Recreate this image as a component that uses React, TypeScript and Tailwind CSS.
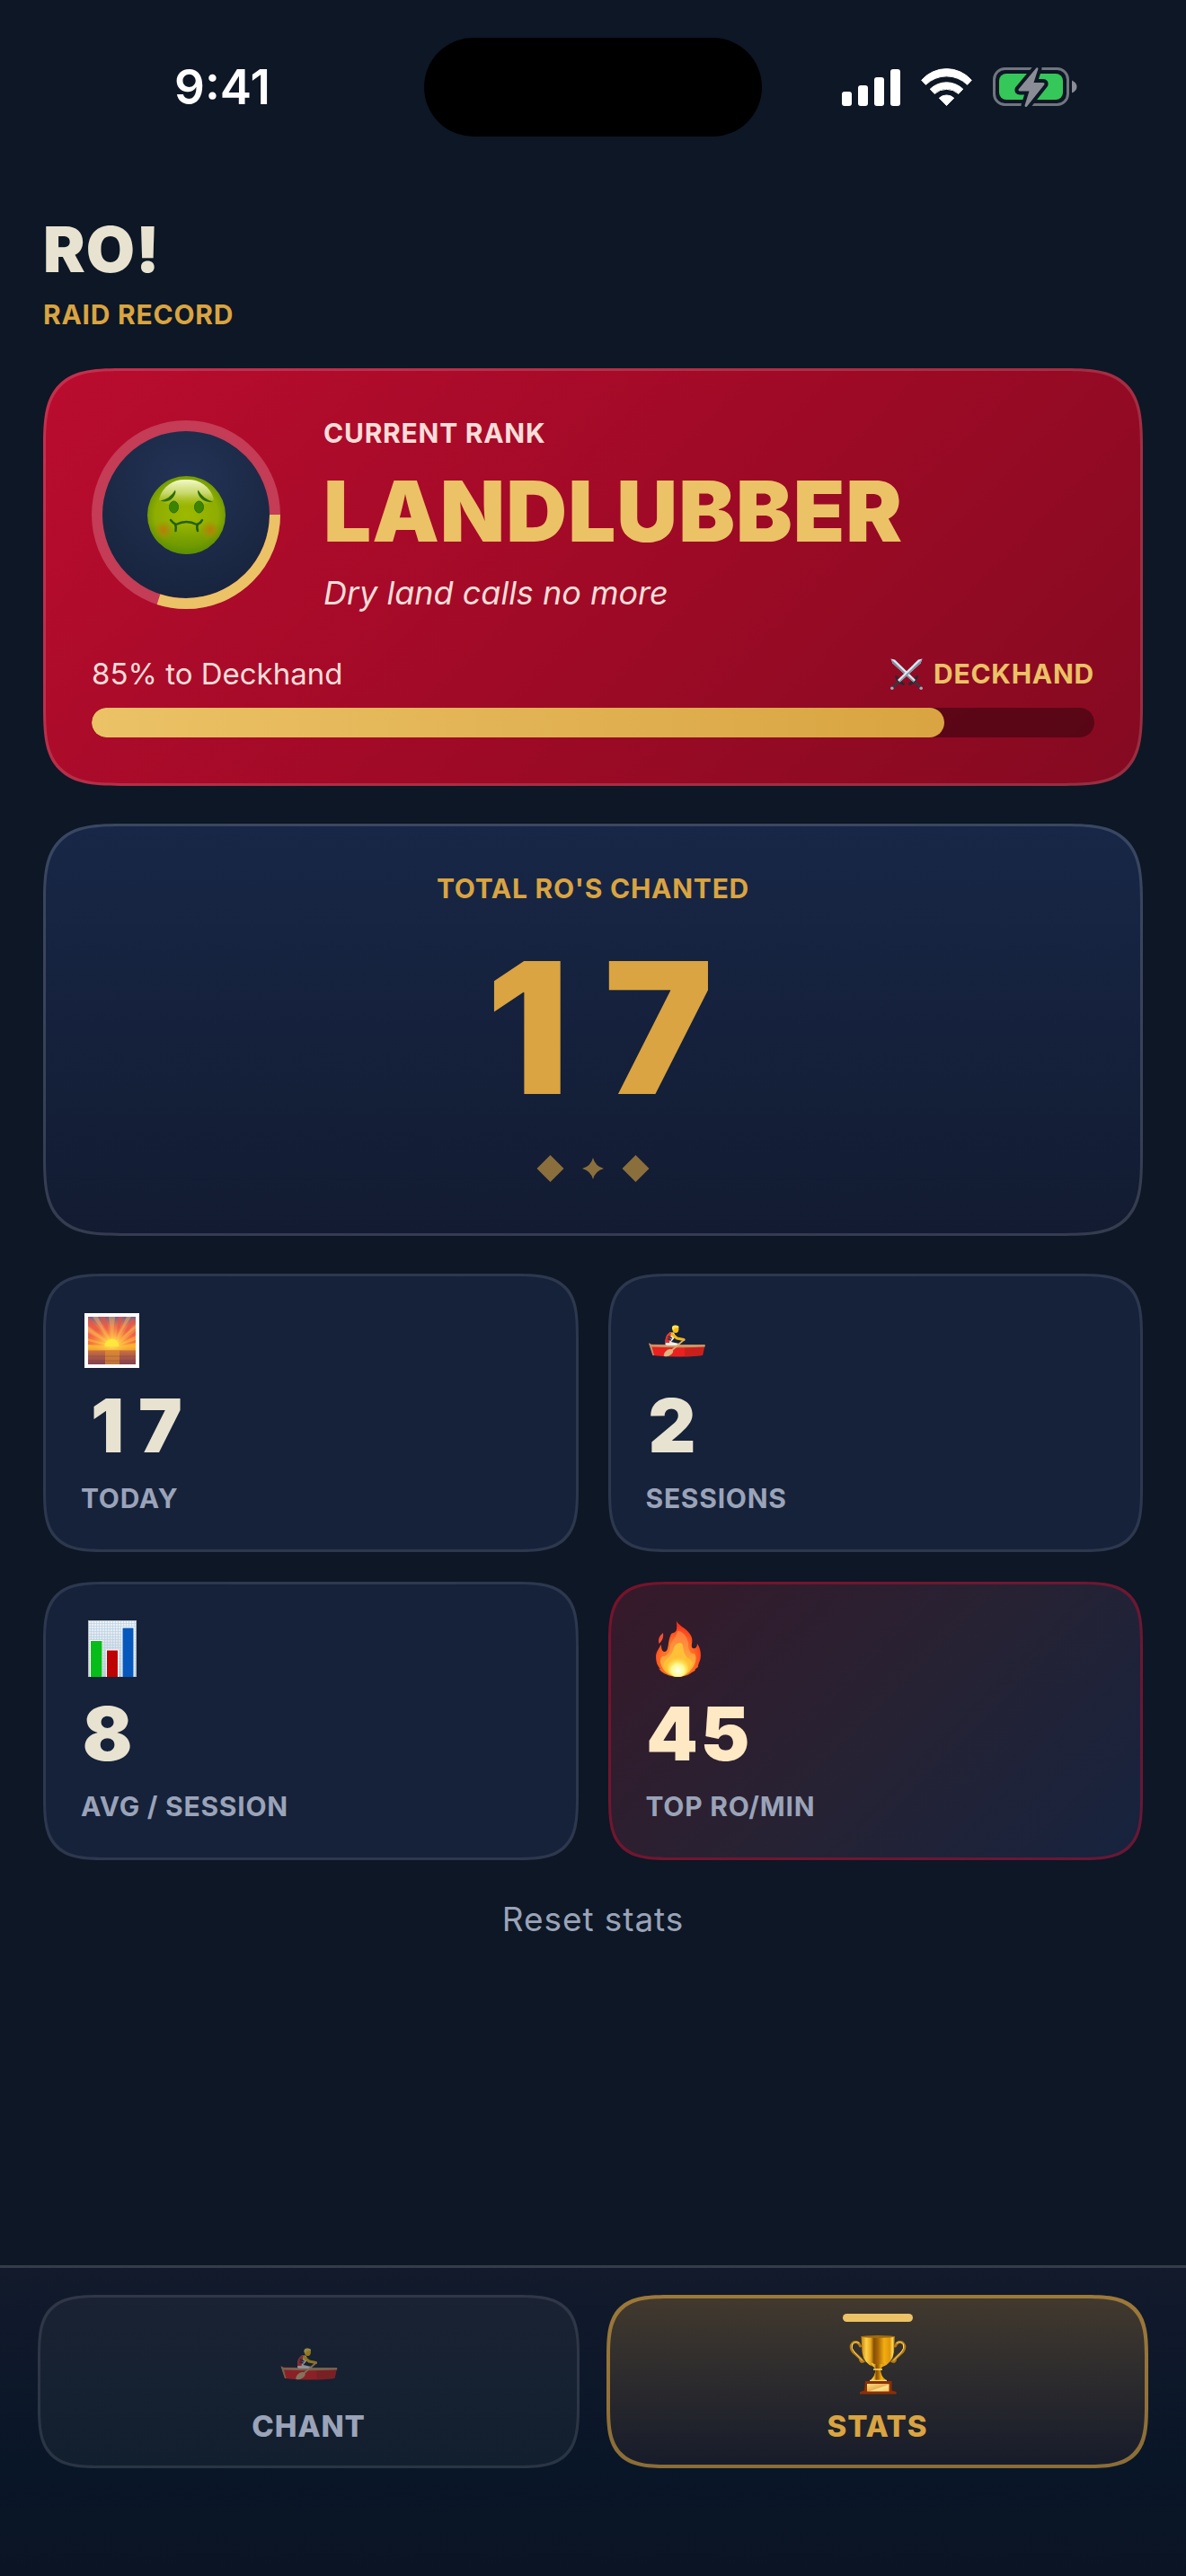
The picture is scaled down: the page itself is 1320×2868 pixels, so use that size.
import type { ReactNode } from "react";

function SignalIcon() {
  return (
    <svg width="65" height="41" viewBox="0 0 65 41" fill="white" aria-hidden="true">
      <rect x="0" y="25" width="11" height="16" rx="3" />
      <rect x="18" y="18" width="11" height="23" rx="3" />
      <rect x="36" y="9" width="11" height="32" rx="3" />
      <rect x="54" y="0" width="11" height="41" rx="3" />
    </svg>
  );
}

function WifiIcon() {
  return (
    <svg width="57" height="42" viewBox="0 0 57 42" fill="white" stroke="white" strokeWidth="1" strokeLinejoin="round" aria-hidden="true">
      <path d="M0.7 13.3A36.8 36.8 0 0 1 56.3 13.3L51.6 18.3A33 33 0 0 0 5.4 18.3Z" />
      <path d="M10.2 23.2A26.3 26.3 0 0 1 46.8 23.2L41.8 28.4A20 20 0 0 0 15.2 28.4Z" />
      <path d="M20.3 33.2A12 12 0 0 1 36.7 33.2L28.5 41.5Z" />
    </svg>
  );
}

function BatteryIcon() {
  const bolt = "M48.5 0.5L28.5 24.5Q28 26.5 30 26.5H40.5L35.5 42.5Q36 45 38 43.5L57.5 19Q58 17 56 17H45.5L50.5 1.5Q50 -0.5 48.5 0.5Z";
  return (
    <svg width="94" height="46" viewBox="0 -1 94 46" aria-hidden="true">
      <rect x="1.5" y="1.5" width="82" height="40" rx="12" fill="none" stroke="#71757f" strokeWidth="3" />
      <rect x="7" y="7" width="71" height="29" rx="8" fill="#35c759" />
      <path d="M88 14.5Q93.500 17 93.500 21.500T88 28.500Z" fill="#8a8d95" />
      <path d={bolt} fill="#0d1725" stroke="#0d1725" strokeWidth="8" strokeLinejoin="round" />
      <path d={bolt} fill="#8a8d95" />
    </svg>
  );
}

function QueasyFace() {
  return (
    <svg width="87" height="87" viewBox="0 0 87 87" aria-hidden="true">
      <defs>
        <radialGradient id="face" cx="0.5" cy="0.5" r="0.5">
          <stop offset="0" stopColor="#9db900" />
          <stop offset="0.8" stopColor="#8fad02" />
          <stop offset="1" stopColor="#729c02" />
        </radialGradient>
        <linearGradient id="faceShade" x1="0" y1="0" x2="0" y2="1">
          <stop offset="0.6" stopColor="#568a00" stopOpacity="0" />
          <stop offset="1" stopColor="#568a00" stopOpacity="0.75" />
        </linearGradient>
        <linearGradient id="faceShine" x1="0" y1="0" x2="0" y2="1">
          <stop offset="0" stopColor="#f4fbc8" />
          <stop offset="0.5" stopColor="#d7e388" stopOpacity="0.8" />
          <stop offset="1" stopColor="#bccd30" stopOpacity="0" />
        </linearGradient>
        <radialGradient id="cheek">
          <stop offset="0" stopColor="#bd7a0c" />
          <stop offset="1" stopColor="#b08b00" stopOpacity="0" />
        </radialGradient>
      </defs>
      <circle cx="43.500" cy="43.500" r="43.500" fill="url(#face)" />
      <circle cx="43.500" cy="43.500" r="43.500" fill="url(#faceShade)" />
      <path d="M13 26C17 10 31 3 43 4C56 3 70 10 74 26C70 31 57 34 43.500 34S17 31 13 26Z" fill="url(#faceShine)" />
      <circle cx="18" cy="60" r="11" fill="url(#cheek)" />
      <circle cx="70" cy="60" r="11" fill="url(#cheek)" />
      <g fill="#2e6d06">
        <path d="M14.500 27.500Q25 25.500 31 15.500Q32.500 18.500 29 23.500Q23 30.500 14.500 27.500Z" />
        <path d="M73 28.500Q62 25.500 56.500 15.500Q55 18.500 58.500 23.500Q64.500 30.500 73 28.500Z" />
      </g>
      <g fill="#3c8400" stroke="#2e7003" strokeWidth="1">
        <ellipse cx="29.500" cy="34.500" rx="5" ry="6.500" />
        <ellipse cx="57.500" cy="34.500" rx="5" ry="6.500" />
      </g>
      <g fill="none" stroke="#21600a" strokeWidth="2.500" strokeLinecap="round">
        <path d="M26 49Q29 53 32 54Q43.500 48 55 54Q59 53 61 49" />
        <path d="M31 54Q32.500 57 31.500 61M56 54Q54.500 57 56 61" />
      </g>
    </svg>
  );
}

function SwordsIcon() {
  return (
    <svg width="36" height="35" viewBox="0 0 36 35" aria-hidden="true">
      <g fill="none" strokeLinecap="round">
        <path d="M27.500 26.500L34 33" stroke="#3a3540" strokeWidth="3" />
        <path d="M21.500 28.500Q26 27 29.500 20.500" stroke="#2b2830" strokeWidth="3" />
        <path d="M8.500 26.500L2 33" stroke="#3a3540" strokeWidth="3" />
        <path d="M14.500 28.500Q10 27 6.500 20.500" stroke="#2b2830" strokeWidth="3" />
      </g>
      <path d="M0.500 0.500L5 1.500L28 24L25.500 26.500L2.500 5.500Z" fill="#dbeaf4" />
      <path d="M0.500 0.500L2.500 5.500L25.500 26.500L26.500 25.500Z" fill="#7f8d9c" />
      <path d="M35.500 0.500L31 1.500L8 24L10.500 26.500L33.500 5.500Z" fill="#dbeaf4" />
      <path d="M35.500 0.500L33.500 5.500L10.500 26.500L9.500 25.500Z" fill="#8593a2" />
      <circle cx="1.800" cy="33.200" r="1.800" fill="#a9a6b2" />
      <circle cx="34.200" cy="33.200" r="1.800" fill="#a9a6b2" />
    </svg>
  );
}

function SunriseIcon() {
  const rays = ["M0 10L5 5L32 36Z", "M0 27L0 20L32 36Z", "M17 4L23 4L32 36Z", "M38 4L43 4L34 36Z", "M54 5L57 10L35 36Z", "M57 20V25L36 36Z", "M4 35V31L30 37Z", "M57 33V30L36 37Z"];
  return (
    <svg width="68" height="66" viewBox="-4 -2 68 66" aria-hidden="true">
      <defs>
        <linearGradient id="sky" x1="0" y1="0" x2="0" y2="1">
          <stop offset="0" stopColor="#77648c" />
          <stop offset="0.2" stopColor="#e8744f" />
          <stop offset="0.45" stopColor="#fb9044" />
          <stop offset="0.62" stopColor="#fbb72b" />
          <stop offset="0.69" stopColor="#f0a52d" />
          <stop offset="0.72" stopColor="#c96e41" />
          <stop offset="1" stopColor="#83404d" />
        </linearGradient>
        <radialGradient id="glow" cx="0.5" cy="0.8" r="0.5">
          <stop offset="0" stopColor="#fff36b" />
          <stop offset="0.4" stopColor="#ffc545" stopOpacity="0.75" />
          <stop offset="1" stopColor="#ff9a4a" stopOpacity="0" />
        </radialGradient>
        <clipPath id="photo"><rect x="4" y="4" width="53" height="53" /></clipPath>
      </defs>
      <rect width="61" height="61" fill="white" />
      <g clipPath="url(#photo)">
        <rect x="4" y="4" width="53" height="53" fill="url(#sky)" />
        {rays.map((d) => <path key={d} d={d} fill="#ed5140" opacity="0.65" />)}
        <path d="M9 4H15L30 34ZM27 4H34L31 34ZM47 4H52L33 34ZM4 15L4 20L28 34ZM57 13V17L34 34Z" fill="#ffc45c" opacity="0.4" />
        <rect x="4" y="4" width="53" height="37" fill="url(#glow)" />
        <path d="M22.500 37Q23 29 30.500 29T38.500 37Z" fill="#ffe73c" />
        <rect x="23" y="41" width="16" height="16" fill="#e8962f" opacity="0.6" />
        <path d="M4 48H57M4 53H57" stroke="#713c50" strokeWidth="1" opacity="0.35" />
      </g>
    </svg>
  );
}

function RowerArt() {
  return (
    <>
      <path d="M0.500 21.500L4.500 34Q32 37 60 34L62.500 23Z" fill="#e9211f" />
      <path d="M40 24H62L60 34Q52 35 40 35.500Z" fill="#b5201a" opacity="0.6" />
      <path d="M0 20.500Q1.500 20 3 22L62.700 22V24.500Q32 26 3.500 24.500L6 34H4.500Z" fill="#c59766" />
      <path d="M18.500 22Q18 12 23.500 8.500H28L30 13L25 19L34 21V23H20Z" fill="#f1eee6" />
      <path d="M18.500 20Q18 11 23.500 8.500H25.500L23 20Z" fill="#e4322c" />
      <path d="M21.500 13L26 15M21 15.500L25 17" stroke="#283449" strokeWidth="1.500" />
      <path d="M26 10.500L31.500 15L39 16.500" fill="none" stroke="#f5b90c" strokeWidth="3.200" strokeLinecap="round" strokeLinejoin="round" />
      <path d="M26 4Q26 0.800 29.500 0.800T33.500 4Q33.500 9 30 9T26 4Z" fill="#f8bd0c" />
      <path d="M26 4.500Q25.500 0.500 29.500 0.500Q34 0.500 33.500 3L29 3.500L28 6Z" fill="#fde35a" />
      <path d="M40 16L25 29" stroke="#d8ac75" strokeWidth="1.700" />
      <path d="M26.500 27.500Q28.500 30 25 33T17.500 35Q15.500 34 18.500 30T26.500 27.500Z" fill="#dfb780" />
    </>
  );
}

function RowerIcon() {
  return (
    <svg width="68" height="66" viewBox="-3 -15 68 66" aria-hidden="true">
      <RowerArt />
    </svg>
  );
}

function ChartIcon() {
  return (
    <svg width="68" height="66" viewBox="-8 -1 68 66" aria-hidden="true">
      <defs>
        <linearGradient id="paper" x1="0" y1="0" x2="0" y2="1">
          <stop offset="0" stopColor="#f1f3f5" />
          <stop offset="1" stopColor="#c8cdd3" />
        </linearGradient>
        <pattern id="mesh" width="3" height="3" patternUnits="userSpaceOnUse">
          <path d="M0 0.500H3M0.500 0V3" stroke="#a9cdea" strokeWidth="0.700" />
        </pattern>
      </defs>
      <rect width="54" height="63" fill="url(#paper)" />
      <rect width="54" height="63" fill="url(#mesh)" opacity="0.8" />
      <rect x="0.500" y="0.500" width="53" height="62" fill="none" stroke="#b4b9c0" />
      <path d="M2 22H16V63H2ZM20 32.500H34V63H20ZM37.500 7.500H51.500V63H37.500Z" fill="white" />
      <rect x="3" y="23" width="12.500" height="40" fill="#06bd19" />
      <rect x="21" y="33.500" width="12" height="29.500" fill="#bd0303" />
      <rect x="38.500" y="8.500" width="12" height="54.500" fill="#0658bd" />
    </svg>
  );
}

function FireIcon() {
  return (
    <svg width="68" height="66" viewBox="-11 -1 68 66" aria-hidden="true">
      <defs>
        <radialGradient id="flame" cx="0.48" cy="0.7" r="0.62">
          <stop offset="0" stopColor="#ff9a2c" />
          <stop offset="0.6" stopColor="#ff6b25" />
          <stop offset="1" stopColor="#f8321b" />
        </radialGradient>
        <linearGradient id="flameMid" x1="0" y1="0" x2="0" y2="1">
          <stop offset="0" stopColor="#ff7a3c" />
          <stop offset="0.5" stopColor="#ff9c3c" />
          <stop offset="1" stopColor="#ffc92e" />
        </linearGradient>
        <radialGradient id="flameCore" cx="0.5" cy="0.7" r="0.6">
          <stop offset="0" stopColor="#fffff0" />
          <stop offset="0.5" stopColor="#fff98c" />
          <stop offset="1" stopColor="#ffe83a" stopOpacity="0" />
        </radialGradient>
      </defs>
      <path d="M22.700 0C24 6 36 9 39.500 18C42 25 38 28 41 31C44 32 46 30 46 26C50 31 50.500 39 49.500 43C48.500 47 46.500 50 47 52L43.500 54.500C45 55 42.500 57 40 58C35 62 29 63 24 63C16 62.500 10 60 6 57L3 53.500L5 54C1 50 0 45 0 40C0 35 4 31 5.500 27C6.500 29 5.500 35 10 35C15 34 12.500 24 17 15C20 13 25 16 22.700 0Z" fill="url(#flame)" />
      <path d="M8 14C8.500 18 8 22 3.500 26C2 21 4 17 8 14Z" fill="#f65031" />
      <path d="M24 12C30 11 36 20 36 27C36 34 39 38 43 37C46 42 44 50 39 55C35 61 28 63 24 63C17 62 10 59 7 52C3 45 6 39 8 40C13 40 16 35 16 28C18 21 22 21 24 12Z" fill="url(#flameMid)" />
      <path d="M26 25C32 25 29 33 33 39C36 44 42 43 40 50C38 58 30 63 24 63C17 63 10 57 9 50C8 45 14 43 18 36C20 31 20 27 26 25Z" fill="#ffc038" />
      <ellipse cx="24.500" cy="51" rx="12" ry="12" fill="url(#flameCore)" />
    </svg>
  );
}

function TrophyIcon() {
  return (
    <svg width="64" height="66" viewBox="0 0 64 66" aria-hidden="true">
      <defs>
        <linearGradient id="cup">
          <stop offset="0" stopColor="#c57f03" />
          <stop offset="0.15" stopColor="#fbd04a" />
          <stop offset="0.28" stopColor="#e8a61a" />
          <stop offset="0.38" stopColor="#845006" />
          <stop offset="0.5" stopColor="#a86605" />
          <stop offset="0.68" stopColor="#f2ae10" />
          <stop offset="0.85" stopColor="#e0960a" />
          <stop offset="0.93" stopColor="#ffd956" />
          <stop offset="1" stopColor="#9a6503" />
        </linearGradient>
        <linearGradient id="plaque" x1="0" y1="0" x2="1" y2="1">
          <stop offset="0" stopColor="#ffe07a" />
          <stop offset="0.5" stopColor="#e9ae53" />
          <stop offset="0.6" stopColor="#ffe38e" />
          <stop offset="1" stopColor="#f3c35c" />
        </linearGradient>
      </defs>
      <g fill="none" stroke="#b57c14" strokeWidth="3" strokeLinecap="round">
        <path d="M12.500 12Q10 6 5 8Q0 12 4 18Q12 25 15.500 29Q13 30 12.500 27" />
        <path d="M51.500 12Q54 6 59 8Q64 12 60 18Q52 25 48.500 29Q51 30 51.500 27" />
      </g>
      <g fill="none" stroke="#fbdc70" strokeWidth="1" strokeLinecap="round">
        <path d="M11 8.500Q6 6 3.500 10Q2 14 6 19L14.500 28" />
        <path d="M53 8.500Q58 6 60.500 10Q62 14 58 19L49.500 28" />
      </g>
      <path d="M13.500 1H51L50 19Q48 31 37.500 35H27Q16 31 14.500 19Z" fill="url(#cup)" />
      <ellipse cx="32.200" cy="1.500" rx="18.700" ry="1.500" fill="#a16c0b" />
      <path d="M24 30Q32 35 41 30L37 35L35 38Q35 45 41 50L42 52H23L24 50Q29 45 29.500 38L27 35Z" fill="url(#cup)" />
      <path d="M27 38H37M23 50.500H42" stroke="#ffe06d" strokeWidth="1.500" />
      <path d="M18 51H47.500V61.500L52.600 63V65.500H12V63L17 61.500Z" fill="#8b3006" />
      <rect x="20" y="54" width="24.500" height="8.500" fill="url(#plaque)" />
    </svg>
  );
}

type Stat = {
  label: string;
  value: number;
  icon: ReactNode;
  hot?: boolean;
};

const stats: Stat[] = [
  { label: "TODAY", value: 17, icon: <SunriseIcon /> },
  { label: "SESSIONS", value: 2, icon: <RowerIcon /> },
  { label: "AVG / SESSION", value: 8, icon: <ChartIcon /> },
  { label: "TOP RO/MIN", value: 45, icon: <FireIcon />, hot: true },
];

const progress = 85;

// iOS style continuous corners, plain radius where unsupported
const cornerLg = "rounded-[60px] supports-[corner-shape:squircle]:rounded-[92px] [corner-shape:superellipse(1.7)]";
const cornerMd = "rounded-[48px] supports-[corner-shape:squircle]:rounded-[73px] [corner-shape:superellipse(1.7)]";

function Digits({ value, cell }: { value: number; cell: string }) {
  return String(value)
    .split("")
    .map((digit, i) => (
      <span key={i} className={`inline-block text-center ${cell}`}>{digit}</span>
    ));
}

function StatusBar() {
  return (
    <div className="grid grid-cols-[1fr_376px_1fr] items-center pt-[42px] text-white">
      <div className="pl-[194px] text-[53px] leading-[60px] font-semibold">9:41</div>
      <div className="h-[110px] rounded-full bg-black" />
      <div className="flex items-center gap-[23px] pl-[89px]">
        <SignalIcon />
        <WifiIcon />
        <BatteryIcon />
      </div>
    </div>
  );
}

function RankRing() {
  return (
    <div className="relative grid size-[210px] shrink-0 place-items-center">
      <svg className="absolute inset-0" viewBox="0 0 210 210" aria-hidden="true">
        <defs>
          <radialGradient id="disc" cx="0.5" cy="0.3" r="0.75">
            <stop offset="0" stopColor="#233356" />
            <stop offset="1" stopColor="#17233c" />
          </radialGradient>
        </defs>
        <circle cx="105" cy="105" r="94" fill="url(#disc)" />
        <circle cx="105" cy="105" r="99" fill="none" stroke="#c43c56" strokeWidth="12" />
        <circle cx="105" cy="105" r="99" fill="none" stroke="#ebc266" strokeWidth="12" pathLength="100" strokeDasharray="30 70" />
      </svg>
      <div className="relative">
        <QueasyFace />
      </div>
    </div>
  );
}

function RankCard() {
  return (
    <section className={`border-[3px] border-white/15 bg-linear-[135deg,#ba0c2f,#a00a26_50%,#840a21] bg-origin-border p-[51px] ${cornerLg}`}>
      <div className="flex items-center gap-12">
        <RankRing />
        <div className="flex flex-col gap-3">
          <p className="text-[30px] leading-9 font-bold tracking-wide text-[#f9ddd9]">CURRENT RANK</p>
          <h2 className="text-[94px] leading-[114px] font-black tracking-[1px] text-[#ebc266]">LANDLUBBER</h2>
          <p className="text-[36px] leading-[44px] text-[#f9ddd9] italic">Dry land calls no more</p>
        </div>
      </div>
      <div className="mt-12 flex items-center justify-between leading-10">
        <span id="rank-progress" className="text-[33px] text-[#f9ddd9]">{progress}% to Deckhand</span>
        <span className="flex items-center gap-3 text-[30px] font-bold tracking-wide text-[#ebc266]">
          <SwordsIcon />
          DECKHAND
        </span>
      </div>
      <div
        role="progressbar"
        aria-labelledby="rank-progress"
        aria-valuenow={progress}
        className="mt-[18px] h-[33px] overflow-hidden rounded-full bg-black/35"
      >
        <div className="h-full rounded-full bg-linear-to-r from-[#ebc266] to-[#d9a441]" style={{ width: `${progress}%` }} />
      </div>
    </section>
  );
}

function TotalCard() {
  return (
    <section className={`flex flex-col items-center gap-3 border-[3px] border-white/15 bg-linear-to-b from-[#182747] to-[#121b31] bg-origin-border p-[51px] ${cornerLg}`}>
      <p className="text-[30px] leading-9 font-bold tracking-wide text-[#d9a441]">TOTAL RO'S CHANTED</p>
      <p className="text-[204px] leading-[249px] font-black text-[#d9a441]">
        <Digits value={17} cell="w-[146px]" />
      </p>
      <svg width="126" height="42" viewBox="0 0 126 42" fill="#8a6f3d" aria-hidden="true">
        <path d="M15.500 6L30.500 21L15.500 36L0.500 21Z" />
        <path d="M63 9Q65.500 18.500 75 21Q65.500 23.500 63 33Q60.500 23.500 51 21Q60.500 18.500 63 9Z" />
        <path d="M110.500 6L125.500 21L110.500 36L95.500 21Z" />
      </svg>
    </section>
  );
}

function StatCard({ stat }: { stat: Stat }) {
  const tone = stat.hot
    ? "border-[#ba0c2f]/50 bg-linear-[135deg,#361929,#272233_50%,#16233e]"
    : "border-white/10 bg-[#16223a]";
  return (
    <div className={`flex flex-col gap-3 border-[3px] bg-origin-border p-[39px] ${cornerMd} ${tone}`}>
      {stat.icon}
      <p className={`text-[82px] leading-[100px] font-black ${stat.hot ? "text-[#ffe8c4]" : "text-[#e8e2d0]"}`}>
        <Digits value={stat.value} cell="w-[59px]" />
      </p>
      <p className="text-[30px] leading-9 font-bold tracking-wide text-[#9aa3b8]">{stat.label}</p>
    </div>
  );
}

function TabBar() {
  return (
    <nav className="grid grid-cols-2 gap-[30px] border-t-[3px] border-[#343c49] bg-linear-[180deg,#121a2c,#091627_65%,#0b1425] px-[42px] pt-[30px] pb-[120px]">
      <button className={`flex h-[193px] flex-col items-center gap-[15px] border-[3px] border-white/10 bg-white/4 pt-[42px] ${cornerMd}`}>
        <svg className="opacity-55" width="64" height="66" viewBox="0 -14 63 66" aria-hidden="true">
          <RowerArt />
        </svg>
        <span className="text-[33px] leading-10 font-extrabold tracking-wide text-[#9aa3b8]">CHANT</span>
      </button>
      <button
        aria-current="page"
        className={`relative flex h-[193px] flex-col items-center gap-[15px] border-4 border-[#d9a441]/60 bg-linear-to-b from-[#433a2e] to-[#161b2a] bg-origin-border pt-[41px] ${cornerMd}`}
      >
        <span className="absolute top-[17px] h-[9px] w-[78px] rounded-full bg-[#ebc266]" />
        <TrophyIcon />
        <span className="text-[33px] leading-10 font-extrabold tracking-wide text-[#d9a441]">STATS</span>
      </button>
    </nav>
  );
}

export default function App() {
  return (
    <div className="flex min-h-screen flex-col bg-[#0d1725] font-['Inter',sans-serif]">
      <StatusBar />
      <main className="flex flex-1 flex-col gap-[42px] px-12 pt-[84px]">
        <header className="flex flex-col gap-3">
          <h1 className="text-[70px] leading-[84px] font-black tracking-[1px] text-[#e8e2d0]">RO!</h1>
          <p className="text-[30px] leading-9 font-bold tracking-wide text-[#d9a441]">RAID RECORD</p>
        </header>
        <RankCard />
        <TotalCard />
        <div className="grid grid-cols-2 gap-[33px]">
          {stats.map((stat) => (
            <StatCard key={stat.label} stat={stat} />
          ))}
        </div>
        <button className="self-center text-[37px] leading-[48px] tracking-wide text-[#9aa3b8]">Reset stats</button>
      </main>
      <TabBar />
    </div>
  );
}
